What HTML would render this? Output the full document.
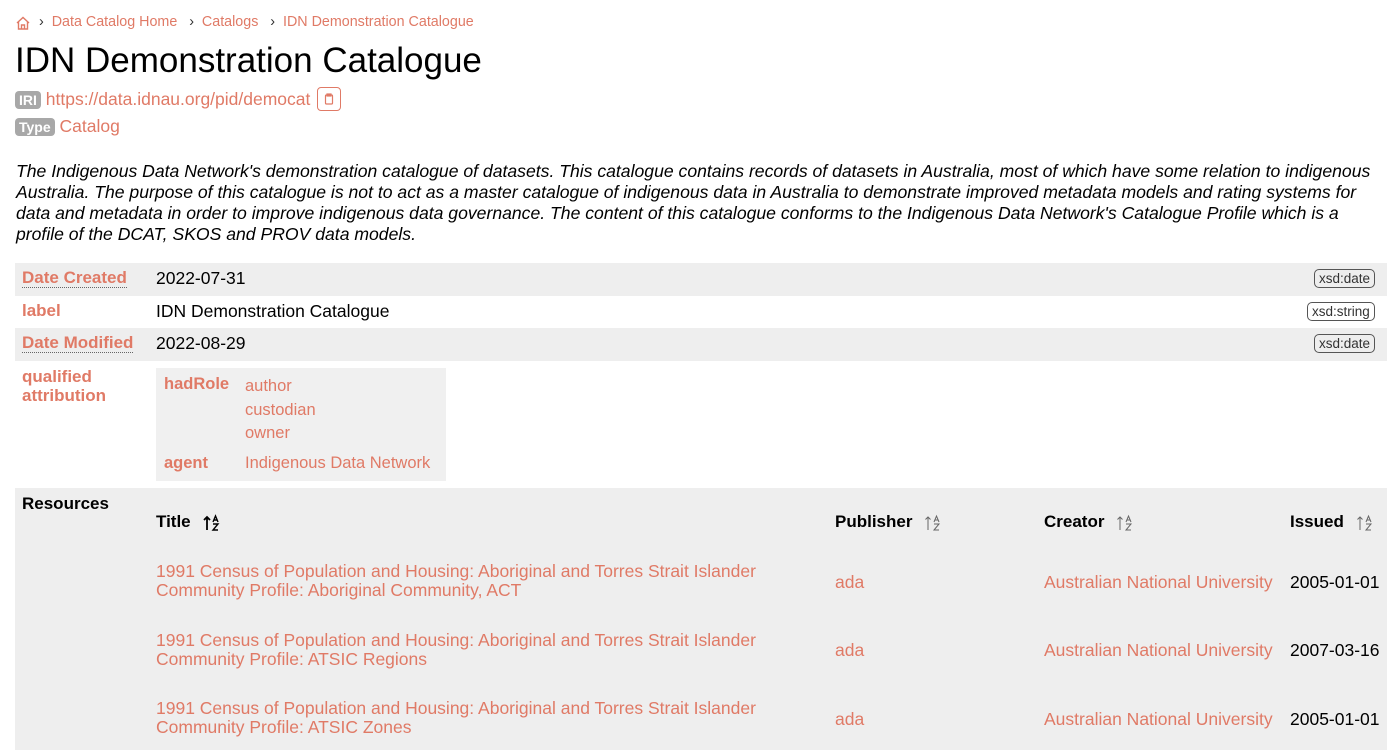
<!DOCTYPE html>
<html><head><meta charset="utf-8"><style>
body{margin:0;width:1395px;height:750px;overflow:hidden;background:#fff;font-family:"Liberation Sans",Arial,sans-serif;color:#000;position:relative}
.a{position:absolute;white-space:nowrap}
.l{color:#e07a66}
.b{font-weight:bold}
.badge{background:#a8a8a8;color:#fff;border-radius:4px;font-size:14px;font-weight:bold;padding:1px 4px}
.dt{border:1px solid #555;border-radius:5px;font-size:13.5px;padding:1px 4px;color:#333}
.row{position:absolute;left:15px;width:1372px}
.lbl{font-size:17px;font-weight:bold;color:#e07a66}
.u{border-bottom:1px dotted #666}
.t{font-size:17.5px}
.so{display:inline-block;vertical-align:middle;margin-left:12px}
</style></head><body>
<svg class="a" style="left:15px;top:15px" width="16" height="16" viewBox="0 0 16 16" fill="none" stroke="#e07a66" stroke-width="1.4"><path d="M2 8 L8 2.5 L14 8 M3.5 6.8 V14 H12.5 V6.8 M6.5 14 V10 H9.5 V14"/></svg>
<div class="a" style="left:39px;top:14px;font-size:14.3px"><span style="color:#333">›</span>&nbsp;&nbsp;<span class="l">Data Catalog Home</span>&nbsp;&nbsp;&nbsp;<span style="color:#333">›</span>&nbsp;&nbsp;<span class="l">Catalogs</span>&nbsp;&nbsp;&nbsp;<span style="color:#333">›</span>&nbsp;&nbsp;<span class="l">IDN Demonstration Catalogue</span></div>
<div class="a" style="left:15px;top:41px;font-size:35px">IDN Demonstration Catalogue</div>
<div class="a" style="left:15px;top:89px;font-size:17.5px"><span class="badge">IRI</span> <span class="l">https://data.idnau.org/pid/democat</span></div>
<div class="a" style="left:317px;top:87px;width:22px;height:22px;border:1px solid #e07a66;border-radius:4px"><svg width="22" height="22" viewBox="0 0 22 22" fill="none" stroke="#e07a66" stroke-width="1.2"><rect x="7.5" y="7" width="7" height="9" rx="1"/><rect x="9" y="6" width="4" height="2"/></svg></div>
<div class="a" style="left:15px;top:116px;font-size:17.5px"><span class="badge">Type</span> <span class="l">Catalog</span></div>
<div class="a" style="left:16px;top:161px;font-size:17.6px;line-height:21px;font-style:italic;white-space:normal;width:1372px">The Indigenous Data Network's demonstration catalogue of datasets. This catalogue contains records of datasets in Australia, most of which have some relation to indigenous Australia. The purpose of this catalogue is not to act as a master catalogue of indigenous data in Australia to demonstrate improved metadata models and rating systems for data and metadata in order to improve indigenous data governance. The content of this catalogue conforms to the Indigenous Data Network's Catalogue Profile which is a profile of the DCAT, SKOS and PROV data models.</div>
<div class="row" style="top:263px;height:33px;background:#eee"></div>
<div class="row" style="top:328px;height:33px;background:#eee"></div>
<div class="a lbl" style="left:22px;top:268px"><span class="u">Date Created</span></div>
<div class="a t" style="left:156px;top:268px">2022-07-31</div>
<div class="a dt" style="left:1314px;top:269px">xsd:date</div>
<div class="a lbl" style="left:22px;top:301px">label</div>
<div class="a t" style="left:156px;top:301px">IDN Demonstration Catalogue</div>
<div class="a dt" style="left:1307px;top:302px">xsd:string</div>
<div class="a lbl" style="left:22px;top:333px"><span class="u">Date Modified</span></div>
<div class="a t" style="left:156px;top:333px">2022-08-29</div>
<div class="a dt" style="left:1314px;top:334px">xsd:date</div>
<div class="a lbl" style="left:22px;top:367px;line-height:19px">qualified<br>attribution</div>
<div class="a" style="left:156px;top:368px;width:290px;height:113px;background:#f0f0f0"></div>
<div class="a lbl" style="left:164px;top:375px;font-size:16.5px">hadRole</div>
<div class="a l" style="left:245px;top:375px;font-size:16.5px;line-height:23.5px">author<br>custodian<br>owner</div>
<div class="a lbl" style="left:164px;top:454px;font-size:16.5px">agent</div>
<div class="a l" style="left:245px;top:454px;font-size:16.5px">Indigenous Data Network</div>
<div class="row" style="top:488px;height:262px;background:#eee"></div>
<div class="a b" style="left:22px;top:494px;font-size:17px">Resources</div>
<div class="a b" style="left:156px;top:512px;font-size:17px">Title<svg class="so" width="18" height="18" viewBox="0 0 18 18" fill="none" stroke="#000" stroke-width="1.8"><path d="M4 16V3M1 6l3-3 3 3"/><path d="M10 8l2.5-6 2.5 6M11 6h3M10 10h5l-5 6h5" stroke-width="1.4"/></svg></div>
<div class="a b" style="left:835px;top:512px;font-size:17px">Publisher<svg class="so" width="18" height="18" viewBox="0 0 18 18" fill="none" stroke="#666" stroke-width="1"><path d="M4 16V3M1.5 5.5L4 3l2.5 2.5M10 8l2.5-6 2.5 6M11 6h3M10 10h5l-5 6h5"/></svg></div>
<div class="a b" style="left:1044px;top:512px;font-size:17px">Creator<svg class="so" width="18" height="18" viewBox="0 0 18 18" fill="none" stroke="#666" stroke-width="1"><path d="M4 16V3M1.5 5.5L4 3l2.5 2.5M10 8l2.5-6 2.5 6M11 6h3M10 10h5l-5 6h5"/></svg></div>
<div class="a b" style="left:1290px;top:512px;font-size:17px">Issued<svg class="so" width="18" height="18" viewBox="0 0 18 18" fill="none" stroke="#666" stroke-width="1"><path d="M4 16V3M1.5 5.5L4 3l2.5 2.5M10 8l2.5-6 2.5 6M11 6h3M10 10h5l-5 6h5"/></svg></div>
<div class="a l t" style="left:156px;top:562px;line-height:19px">1991 Census of Population and Housing: Aboriginal and Torres Strait Islander<br>Community Profile: Aboriginal Community, ACT</div>
<div class="a l t" style="left:835px;top:572px">ada</div>
<div class="a l t" style="left:1044px;top:572px">Australian National University</div>
<div class="a t" style="left:1290px;top:572px">2005-01-01</div>
<div class="a l t" style="left:156px;top:631px;line-height:19px">1991 Census of Population and Housing: Aboriginal and Torres Strait Islander<br>Community Profile: ATSIC Regions</div>
<div class="a l t" style="left:835px;top:640px">ada</div>
<div class="a l t" style="left:1044px;top:640px">Australian National University</div>
<div class="a t" style="left:1290px;top:640px">2007-03-16</div>
<div class="a l t" style="left:156px;top:699px;line-height:19px">1991 Census of Population and Housing: Aboriginal and Torres Strait Islander<br>Community Profile: ATSIC Zones</div>
<div class="a l t" style="left:835px;top:709px">ada</div>
<div class="a l t" style="left:1044px;top:709px">Australian National University</div>
<div class="a t" style="left:1290px;top:709px">2005-01-01</div>
</body></html>
